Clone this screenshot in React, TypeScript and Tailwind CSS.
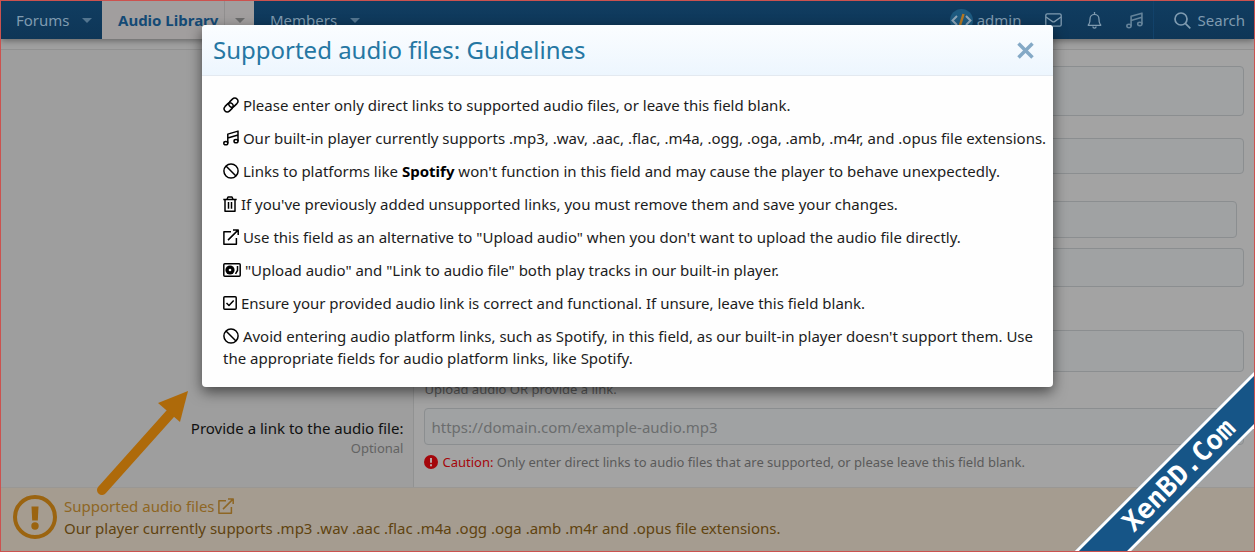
import type { ReactNode } from "react";

function Svg({ className, box = "0 0 16 16", children }: { className: string; box?: string; children: ReactNode }) {
  return (
    <svg
      className={className}
      viewBox={box}
      fill="none"
      stroke="currentColor"
      strokeWidth="1.5"
      strokeLinejoin="round"
      aria-hidden="true"
    >
      {children}
    </svg>
  );
}

const inlineIcon = "inline-block size-4 align-[-2px]";

function LinkIcon() {
  return (
    <Svg className={inlineIcon}>
      <path d="M7.2 9.6C5.6 8.6 5.2 6.4 6.6 4.9L9.4 2.1C10.8 .7 12.8 .7 14 2S15.2 5.2 13.9 6.6L11.1 9.4C9.9 10.600 8.500 10.500 7.200 9.600" />
      <path d="M8.8 6.4C10.4 7.4 10.8 9.6 9.4 11.1L6.6 13.9C5.2 15.3 3.2 15.3 2 14S.8 10.8 2.1 9.4L4.9 6.600C6.100 5.400 7.500 5.500 8.800 6.400" />
    </Svg>
  );
}

function MusicIcon({ className = inlineIcon }: { className?: string }) {
  return (
    <Svg className={className}>
      <ellipse cx="2.8" cy="13.2" rx="2" ry="1.6" />
      <ellipse cx="13" cy="11.2" rx="2" ry="1.6" />
      <path d="M4.8 13.2V4.1L15 1.1V11.2M4.8 8L15 5" />
    </Svg>
  );
}

function BanIcon() {
  return (
    <Svg className={inlineIcon}>
      <circle cx="8" cy="8" r="7.1" />
      <path d="M3 3L13 13" />
    </Svg>
  );
}

function TrashIcon() {
  return (
    <Svg className="inline-block h-4 w-[14px] align-[-2px]" box="0 0 14 16">
      <path d="M.3 3.5H13.7M4 3.3L5 1H9L10 3.3M2 3.5V15.2H12V3.5" />
      <path d="M5.5 6V12.7M8.5 6V12.7" />
    </Svg>
  );
}

function ExternalIcon({ className = inlineIcon }: { className?: string }) {
  return (
    <Svg className={className}>
      <path d="M8 2.7H.9V15.2H13.4V9M10 .9H15.2V6M15 1.1L5 11.1" />
    </Svg>
  );
}

function TurntableIcon() {
  return (
    <Svg className="inline-block h-4 w-[18px] align-[-2px]" box="0 0 18 16">
      <rect x=".8" y="1.8" width="16.4" height="12.4" rx="1" />
      <circle cx="7" cy="8" r="4.6" fill="currentColor" stroke="none" />
      <circle cx="7" cy="8" r="1.3" fill="#fff" stroke="none" />
      <path d="M14.5 4V8.5L12.5 11.8" />
    </Svg>
  );
}

function CheckIcon() {
  return (
    <Svg className="inline-block h-4 w-[14px] align-[-2px]" box="0 0 14 16">
      <rect x=".8" y="1.8" width="12.4" height="12.4" rx="1" />
      <path d="M3.5 8L6 10.5L10.7 5.6" />
    </Svg>
  );
}

function Caret() {
  return (
    <svg className="h-[5px] w-[10px]" viewBox="0 0 10 5" fill="currentColor" aria-hidden="true">
      <path d="M0 0H10L5 5Z" />
    </svg>
  );
}

const guidelines = [
  { icon: <LinkIcon />, text: "Please enter only direct links to supported audio files, or leave this field blank." },
  {
    icon: <MusicIcon />,
    text: "Our built-in player currently supports .mp3, .wav, .aac, .flac, .m4a, .ogg, .oga, .amb, .m4r, and .opus file extensions.",
  },
  {
    icon: <BanIcon />,
    text: (
      <>
        Links to platforms like <strong className="text-black">Spotify</strong> won't function in this field and may
        cause the player to behave unexpectedly.
      </>
    ),
  },
  { icon: <TrashIcon />, text: "If you've previously added unsupported links, you must remove them and save your changes." },
  {
    icon: <ExternalIcon />,
    text: 'Use this field as an alternative to "Upload audio" when you don\'t want to upload the audio file directly.',
  },
  { icon: <TurntableIcon />, text: '"Upload audio" and "Link to audio file" both play tracks in our built-in player.' },
  { icon: <CheckIcon />, text: "Ensure your provided audio link is correct and functional. If unsure, leave this field blank." },
  {
    icon: <BanIcon />,
    text: "Avoid entering audio platform links, such as Spotify, in this field, as our built-in player doesn't support them. Use the appropriate fields for audio platform links, like Spotify.",
  },
];

function NavBar() {
  return (
    <nav className="flex h-[38px] items-stretch bg-linear-to-b from-[#103d61] to-[#0e3657] text-[15px] text-[#7f9bb0] shadow-[0_2px_6px_rgba(0,0,0,0.35)]">
      <div className="flex w-[101px] items-center justify-between pr-[10px] pl-[15px]">
        <a href="#">Forums</a>
        <button aria-label="Forums menu" className="text-[#53758f]">
          <Caret />
        </button>
      </div>
      <div className="flex w-[152px] items-stretch justify-between bg-[#a19e9e] pl-4">
        <a href="#" className="self-center font-bold whitespace-nowrap text-[#144a75]">
          Audio Library
        </a>
        <button
          aria-label="Audio Library menu"
          className="flex w-[30px] items-center justify-center border-l border-[#918f8f] text-[#6c6c6c]"
        >
          <Caret />
        </button>
      </div>
      <div className="flex w-[116px] items-center justify-between pr-[10px] pl-4">
        <a href="#">Members</a>
        <button aria-label="Members menu" className="text-[#53758f]">
          <Caret />
        </button>
      </div>
      <div className="ml-auto flex items-center pr-[9px]">
        <a href="#" className="mr-[23px] flex items-center gap-1">
          <svg className="size-[23px]" viewBox="0 0 23 23" fill="none" aria-hidden="true">
            <circle cx="11.5" cy="11.5" r="11.5" fill="#1d5a80" />
            <path d="M7 7L2.5 11.5L7 16M16 7L20.5 11.5L16 16" stroke="#8fa6b8" strokeWidth="2" />
            <path d="M13.5 5L9.5 18" stroke="#b37722" strokeWidth="2.5" />
          </svg>
          admin
        </a>
        <button aria-label="Conversations" className="mr-[25px]">
          <svg className="h-[14px] w-[17px]" viewBox="0 0 17 14" fill="none" stroke="currentColor" strokeWidth="1.3" aria-hidden="true">
            <rect x=".8" y=".8" width="15.4" height="12.4" rx="1.5" />
            <path d="M1 4L7.5 8.6Q8.5 9.3 9.5 8.6L16 4" />
          </svg>
        </button>
        <button aria-label="Alerts" className="mr-6">
          <svg className="h-[17px] w-[15px]" viewBox="0 0 15 17" fill="none" stroke="currentColor" strokeWidth="1.3" aria-hidden="true">
            <path d="M7.5 0V2.2M1.3 13.3H13.7Q14 12.8 13 11.9C12 10.8 12 9.5 12 7.2A4.5 4.8 0 0 0 3 7.2C3 9.5 3 10.8 2 11.9Q1 12.8 1.3 13.3ZM5.9 14.6A1.6 1.6 0 0 0 9.1 14.6" />
          </svg>
        </button>
        <button aria-label="Audio" className="mr-[10px] text-[#64839a]">
          <MusicIcon className="size-[17px]" />
        </button>
        <button className="flex h-full items-center gap-[7px] border-l border-[#12426a] pl-5">
          <svg className="size-[17px]" viewBox="0 0 17 17" fill="none" stroke="currentColor" strokeWidth="1.7" aria-hidden="true">
            <circle cx="7" cy="7" r="6" />
            <path d="M11.3 11.3L16.3 16.3" />
          </svg>
          Search
        </button>
      </div>
    </nav>
  );
}

const fieldBox = "block w-full resize-none rounded-[4px] border border-[#8b8e90] bg-[#a0a2a3]";

function AudioForm() {
  return (
    <form className="mt-[10px] flex border-t border-[#919191] text-[15px]">
      <div className="flex w-[33%] flex-col justify-end border-r border-[#919292] bg-[#9e9e9e] pr-[10px] pb-[30px] text-right">
        <label htmlFor="audio-link" className="leading-[22px] text-[#111]">
          Provide a link to the audio file:
        </label>
        <span className="text-[13px] leading-[18px] text-[#636363]">Optional</span>
      </div>
      <div className="flex-1 bg-[#a3a3a3] px-[10px] pt-4 pb-4">
        <textarea aria-label="Description" className={`${fieldBox} h-[50px]`} />
        <input aria-label="Artist" className={`${fieldBox} mt-[22px] h-9`} />
        <div className="mt-[27px] pr-[7px]">
          <input aria-label="Album" className={`${fieldBox} h-[37px]`} />
        </div>
        <input aria-label="Genre" className={`${fieldBox} mt-[10px] h-[39px]`} />
        <input aria-label="Upload audio" className={`${fieldBox} mt-[43px] h-[42px]`} />
        <p className="mt-2 text-[13px] leading-[18px] text-[#5a5a5a]">Upload audio OR provide a link.</p>
        <input
          id="audio-link"
          type="url"
          placeholder="https://domain.com/example-audio.mp3"
          className={`${fieldBox} mt-[10px] h-[37px] px-[6px] placeholder:text-[#6b6d6e]`}
        />
        <p className="mt-2 text-[13px] leading-[18px] text-[#5a5a5a]">
          <svg className="mr-1 inline-block size-[14px] align-[-2px]" viewBox="0 0 14 14" aria-hidden="true">
            <circle cx="7" cy="7" r="7" fill="#a4060b" />
            <path d="M7 3V7.8M7 9.3V11.2" stroke="#b9a4a4" strokeWidth="2" />
          </svg>
          <span className="text-[#a4060b]">Caution:</span> Only enter direct links to audio files that are supported, or
          please leave this field blank.
        </p>
      </div>
    </form>
  );
}

function Notice() {
  return (
    <div className="flex flex-1 items-start border-t border-[#999794] bg-[#a59c90] pt-[7px] pb-3 pl-3 text-[15px] leading-[22px] text-[#60430f]">
      <svg className="mr-[7px] size-[44px]" viewBox="0 0 44 44" fill="none" aria-hidden="true">
        <circle cx="22" cy="22" r="20" stroke="#9b6410" strokeWidth="4" />
        <path d="M18.5 11.5H25.5L24.8 25.5H19.2Z" fill="#9b6410" />
        <circle cx="22" cy="31" r="3.7" fill="#9b6410" />
      </svg>
      <div>
        <a href="#" className="text-[#8e6624]">
          Supported audio files <ExternalIcon />
        </a>
        <p>Our player currently supports .mp3 .wav .aac .flac .m4a .ogg .oga .amb .m4r and .opus file extensions.</p>
      </div>
    </div>
  );
}

function GuidelinesDialog() {
  return (
    <div
      role="dialog"
      aria-labelledby="guidelines-title"
      className="w-[851px] overflow-hidden rounded-[4px] bg-[#fefefe] shadow-[0_5px_14px_rgba(0,0,0,0.55)]"
    >
      <header className="flex h-[51px] items-center justify-between border-b border-[#e3e9f0] bg-linear-to-b from-[#fbfdff] to-[#edf6fe] pr-[19px] pl-[11px]">
        <h2 id="guidelines-title" className="text-[24px] text-[#2577a3]">
          Supported audio files: Guidelines
        </h2>
        <button aria-label="Close" className="text-[#84a9c6]">
          <svg className="size-[17px]" viewBox="0 0 17 17" stroke="currentColor" strokeWidth="3.5" aria-hidden="true">
            <path d="M1.5 1.5L15.5 15.5M15.5 1.5L1.5 15.5" />
          </svg>
        </button>
      </header>
      <ul className="space-y-[11px] pt-[18px] pr-1 pb-[18px] pl-[21px] text-[15px] leading-[22px] text-[#1c1c1c]">
        {guidelines.map((item, i) => (
          <li key={i}>
            <span className="text-black">{item.icon}</span> {item.text}
          </li>
        ))}
      </ul>
    </div>
  );
}

export default function App() {
  return (
    <div className="relative flex min-h-screen flex-col overflow-hidden border border-[#cc524f] bg-[#a0a0a0] font-['Noto_Sans','Open_Sans',sans-serif]">
      <NavBar />
      <AudioForm />
      <Notice />

      <svg className="absolute bottom-[55px] left-[94px] h-[106px] w-[94px]" viewBox="0 0 94 106" aria-hidden="true">
        <path d="M7 100L75 24" stroke="#ae6a0a" strokeWidth="10" strokeLinecap="round" />
        <path d="M93 1L63 13L85 32Z" fill="#ae6a0a" />
      </svg>

      <div className="absolute inset-0 flex items-start justify-center pt-[24px]">
        <GuidelinesDialog />
      </div>

      <div className="absolute right-[-75px] bottom-[56px] flex h-10 w-[300px] -rotate-45 items-center justify-center border-y-3 border-white bg-[#165587] font-['DejaVu_Sans_Mono',monospace] text-[27px] font-bold text-white">
        XenBD.Com
      </div>
    </div>
  );
}
